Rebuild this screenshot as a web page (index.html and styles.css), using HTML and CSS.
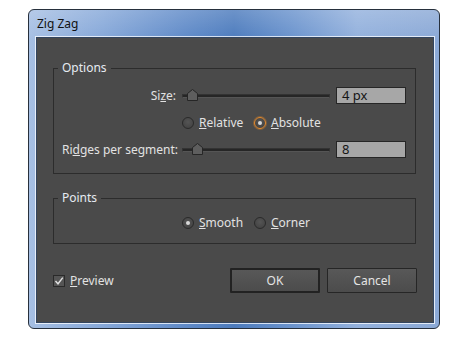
FILE: index.html
```html
<!DOCTYPE html>
<html lang="en">
<head>
    <meta charset="UTF-8">
    <title>Zig Zag</title>
    <link rel="stylesheet" href="styles.css">
</head>
<body>
    <div class="window">
        <div class="titlebar">Zig Zag</div>
        <div class="content">
            <div class="group options">
                <div class="group-title">Options</div>
                <div class="opt-grid">
                    <label class="opt-label">Si<u>z</u>e:</label>
                    <div class="slider">
                        <div class="track"></div>
                        <svg class="thumb" style="left: 5px" width="11" height="12" viewBox="0 0 11 12">
                            <path d="M5.5 0.5 L10.5 4.5 L10.5 11.5 L0.5 11.5 L0.5 4.5 Z" fill="#5e5e5e" stroke="#262626"/>
                        </svg>
                    </div>
                    <div class="field">4 px</div>

                    <div></div>
                    <div class="radios">
                        <span class="radio"><span class="dot"></span><span><u>R</u>elative</span></span>
                        <span class="radio"><span class="dot checked focus"></span><span><u>A</u>bsolute</span></span>
                    </div>
                    <div></div>

                    <label class="opt-label">Ri<u>d</u>ges per segment:</label>
                    <div class="slider">
                        <div class="track"></div>
                        <svg class="thumb" style="left: 10px" width="11" height="12" viewBox="0 0 11 12">
                            <path d="M5.5 0.5 L10.5 4.5 L10.5 11.5 L0.5 11.5 L0.5 4.5 Z" fill="#5e5e5e" stroke="#262626"/>
                        </svg>
                    </div>
                    <div class="field">8</div>
                </div>
            </div>

            <div class="group points">
                <div class="group-title">Points</div>
                <div class="radios points-row">
                    <span class="radio"><span class="dot checked"></span><span><u>S</u>mooth</span></span>
                    <span class="radio"><span class="dot"></span><span><u>C</u>orner</span></span>
                </div>
            </div>

            <div class="footer">
                <span class="check">
                    <svg class="box" width="12" height="12" viewBox="0 0 12 12">
                        <rect x="0.5" y="0.5" width="11" height="11" fill="#555" stroke="#2a2a2a"/>
                        <path d="M2.5 6 L5 8.8 L9.8 2.6" fill="none" stroke="#e2e2e2" stroke-width="1.4"/>
                    </svg>
                    <span><u>P</u>review</span>
                </span>
                <div class="buttons">
                    <button class="btn default">OK</button>
                    <button class="btn">Cancel</button>
                </div>
            </div>
        </div>
    </div>
</body>
</html>
```

FILE: styles.css
```css
body, html {
    margin: 0;
    padding: 0;
    background: #fff;
    font-family: 'Noto Sans', 'Open Sans', sans-serif;
    font-size: 12px;
}
.window {
    box-sizing: border-box;
    width: 412px;
    height: 320px;
    margin: 9px 0 0 28px;
    padding: 0 5px 5px 7px;
    border: 1px solid #27303c;
    border-radius: 6px;
    background:
        linear-gradient(to bottom, rgba(255,255,255,0.18), rgba(255,255,255,0) 30px),
        linear-gradient(to right, #a6bfe3 0%, #86a8d9 18%, #5f8ac8 38%, #4c7bbd 50%, #6a93cd 64%, #93b1dd 80%, #8ba9d6 100%);
}
.titlebar {
    height: 27px;
    line-height: 27px;
    padding-left: 1px;
    color: #111;
    font-size: 12px;
}
.content {
    box-sizing: border-box;
    height: 286px;
    padding: 30px 17px 0 16px;
    background: #4a4a4a;
    border: 1px solid #33455f;
    box-shadow: 0 0 0 1px rgba(255,255,255,0.75);
    color: #e2e2e2;
}
.group {
    border: 1px solid #2c2c2c;
}
.group-title {
    width: fit-content;
    margin: -9px 0 0 4px;
    padding: 0 4px;
    line-height: 16px;
    background: #4a4a4a;
    color: #e6ebf2;
}
.options {
    padding: 0 9px 15px 8px;
}
.options .group-title {
    margin-left: -4px;
}
.opt-grid {
    display: grid;
    grid-template-columns: 114px 148px 70px;
    grid-template-rows: 17px 17px 17px;
    column-gap: 6px;
    row-gap: 10px;
    align-items: center;
    margin-top: 11px;
}
.opt-label {
    text-align: right;
    white-space: nowrap;
}
.slider {
    position: relative;
    height: 17px;
    display: flex;
    align-items: center;
}
.track {
    flex: 1;
    height: 2px;
    background: #262626;
    border: 1px solid #333;
    border-bottom-color: #555;
}
.thumb {
    position: absolute;
    top: 2px;
}
.field {
    box-sizing: border-box;
    height: 17px;
    line-height: 15px;
    padding-left: 5px;
    background: #a7a7a7;
    border: 1px solid #262626;
    color: #151515;
    font-size: 13px;
}
.radios {
    display: flex;
    align-items: center;
}
.radio {
    display: flex;
    align-items: center;
    gap: 5px;
    width: 72px;
    white-space: nowrap;
}
.dot {
    box-sizing: border-box;
    width: 12px;
    height: 12px;
    border-radius: 50%;
    border: 1px solid #2a2a2a;
    background: radial-gradient(circle at 50% 40%, #555 0%, #3f3f3f 100%);
    position: relative;
}
.dot.checked::after {
    content: "";
    position: absolute;
    left: 3px;
    top: 3px;
    width: 4px;
    height: 4px;
    border-radius: 50%;
    background: #d8d8d8;
}
.dot.focus {
    border: 1px solid #e48a2c;
    box-shadow: 0 0 0 1px rgba(228,138,44,0.35);
}
.points {
    margin-top: 24px;
    padding: 0 0 12px 128px;
}
.points .group-title {
    margin-left: -124px;
}
.points-row {
    margin-top: 8px;
    height: 17px;
}
.footer {
    display: flex;
    align-items: center;
    margin-top: 24px;
}
.check {
    display: flex;
    align-items: center;
    gap: 5px;
}
.box {
    display: block;
}
.buttons {
    display: flex;
    gap: 7px;
    margin-left: auto;
    margin-right: -1px;
}
.btn {
    box-sizing: border-box;
    width: 90px;
    height: 25px;
    font-family: 'Noto Sans', 'Open Sans', sans-serif;
    font-size: 12px;
    color: #e4e4e4;
    background: linear-gradient(to bottom, #585858, #4c4c4c);
    border: 1px solid #262626;
    border-radius: 1px;
    padding: 0;
}
.btn.default {
    border: 2px solid #222;
}
```
